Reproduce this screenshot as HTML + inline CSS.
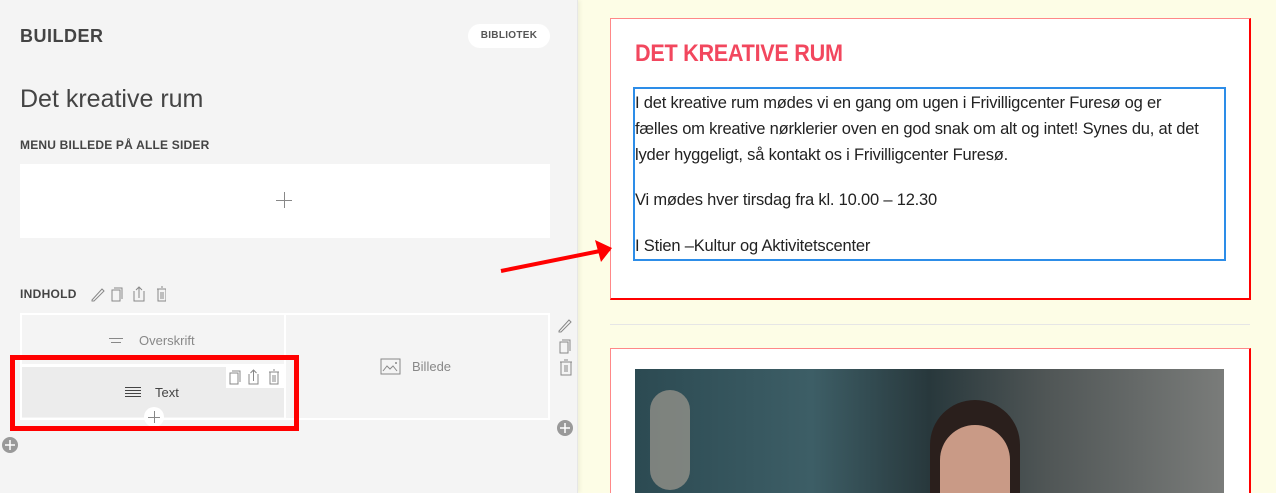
<!DOCTYPE html>
<html style="overflow:hidden;width:1276px;height:493px"><head><meta charset="utf-8"><style>
*{margin:0;padding:0;box-sizing:border-box}
body{width:1276px;height:493px;overflow:hidden;position:relative;font-family:"Liberation Sans",sans-serif;background:#fdfde6}
.a{position:absolute}
#left{left:0;top:0;width:578px;height:493px;background:#f4f4f4;border-right:1px solid #e6e6e6;box-shadow:2px 0 4px rgba(0,0,0,.06)}
.ic{stroke:#888;fill:none;stroke-width:1}
</style></head><body>
<div id="left" class="a">
 <div class="a" style="left:20px;top:26px;font-size:18px;font-weight:bold;color:#444;letter-spacing:.5px">BUILDER</div>
 <div class="a" style="left:468px;top:24px;width:82px;height:24px;background:#fff;border-radius:12px;font-size:10px;font-weight:bold;color:#555;text-align:center;line-height:24px;letter-spacing:.3px">BIBLIOTEK</div>
 <div class="a" style="left:20px;top:85px;font-size:25px;color:#444">Det kreative rum</div>
 <div class="a" style="left:20px;top:138px;font-size:12px;font-weight:bold;color:#444;letter-spacing:.2px">MENU BILLEDE PÅ ALLE SIDER</div>
 <div class="a" style="left:20px;top:164px;width:530px;height:74px;background:#fff"></div>
 <svg class="a" style="left:276px;top:192px" width="16" height="16"><path class="ic" d="M0 8.5H16M8.5 0V16"/></svg>
 <div class="a" style="left:20px;top:287px;font-size:12px;font-weight:bold;color:#444;letter-spacing:.3px">INDHOLD</div>
 <svg class="a" style="left:90px;top:286px" width="76" height="16"><path class="ic" d="M2 14L12 3l2 2L4 15H2z M22 4h8v11h-8z M24 2h8v11 M44 5v10h10V5 M49 12V1 M46 4l3-3 3 3 M67 3h10 M71 1h2 M68 3v12h8V3 M71 6v7 M73 6v7"/></svg>
 <div class="a" style="left:20px;top:313px;width:530px;height:107px;border:2px solid #fff"></div>
 <div class="a" style="left:284px;top:313px;width:2px;height:107px;background:#fff"></div>
 <div class="a" style="left:20px;top:364px;width:266px;height:3px;background:#fff"></div>
 <svg class="a" style="left:108px;top:336px" width="18" height="10"><path class="ic" d="M1 2.5h14M3 6.5h10"/></svg>
 <div class="a" style="left:139px;top:333px;font-size:13px;color:#888">Overskrift</div>
 <div class="a" style="left:22px;top:367px;width:262px;height:50px;background:#ececec"></div>
 <div class="a" style="left:226px;top:367px;width:58px;height:21px;background:#fff"></div>
 <svg class="a" style="left:229px;top:369px" width="56" height="16"><path class="ic" d="M1 4h8v11H1z M3 2h8v11 M20 5v10h9V5 M24.5 12V1 M21.5 4l3-3 3 3 M40 3h10 M44 1h2 M41 3v12h8V3 M44 6v7 M46 6v7"/></svg>
 <svg class="a" style="left:124px;top:386px" width="20" height="12"><path d="M1 1.5h16M1 4.5h16M1 7.5h16M1 10.5h16" stroke="#444" stroke-width="1"/></svg>
 <div class="a" style="left:155px;top:385px;font-size:13px;color:#444">Text</div>
 <div class="a" style="left:144px;top:407px;width:20px;height:20px;border-radius:50%;background:#fff"></div>
 <svg class="a" style="left:148px;top:411px" width="12" height="12"><path class="ic" d="M0 6.5H12M6.5 0V12"/></svg>
 <div class="a" style="left:10px;top:355px;width:289px;height:76px;border:5px solid #f00"></div>
 <svg class="a" style="left:380px;top:358px" width="22" height="18"><rect x="1" y="1" width="19" height="15" class="ic"/><path class="ic" d="M3 13l4-5 3 3 3-3 4 5"/><circle cx="16" cy="5" r="1" fill="#888"/></svg>
 <div class="a" style="left:412px;top:359px;font-size:13px;color:#888">Billede</div>
 <svg class="a" style="left:557px;top:317px" width="18" height="60"><path class="ic" d="M2 14L12 3l2 2L4 15H2z M3 25h8v11H3z M5 23h8v11 M3 45h12 M7 43h4 M4 45v13h10V45 M8 48v7 M10 48v7"/></svg>
 <div class="a" style="left:557px;top:420px;width:16px;height:16px;border-radius:50%;background:#999"></div>
 <svg class="a" style="left:557px;top:420px" width="16" height="16"><path d="M3 8h10M8 3v10" stroke="#fff" stroke-width="1.5"/></svg>
 <div class="a" style="left:2px;top:437px;width:16px;height:16px;border-radius:50%;background:#999"></div>
 <svg class="a" style="left:2px;top:437px" width="16" height="16"><path d="M3 8h10M8 3v10" stroke="#fff" stroke-width="1.5"/></svg>
</div>
<div class="a" style="left:610px;top:18px;width:641px;height:282px;background:#fff;border:1px solid #f88;border-right:2px solid #f00;border-bottom:2px solid #f00"></div>
<div class="a" style="left:635px;top:40px;font-size:24px;font-weight:bold;color:#f2475e;transform:scaleX(.9);transform-origin:left;letter-spacing:-.3px">DET KREATIVE RUM</div>
<div class="a" style="left:633px;top:87px;width:593px;height:174px;border:2px solid #2d8de8"></div>
<div class="a" style="left:635px;top:90px;width:620px;font-size:16.5px;line-height:26px;color:#222;letter-spacing:-.2px;white-space:nowrap">
I det kreative rum mødes vi en gang om ugen i Frivilligcenter Furesø og er<br>fælles om kreative nørklerier oven en god snak om alt og intet! Synes du, at det<br>lyder hyggeligt, så kontakt os i Frivilligcenter Furesø.
<div style="margin-top:19px">Vi mødes hver tirsdag fra kl. 10.00 – 12.30</div>
<div style="margin-top:20px">I Stien –Kultur og Aktivitetscenter</div>
</div>
<svg class="a" style="left:498px;top:236px" width="130" height="40"><path d="M3 35L112 13" stroke="#f00" stroke-width="4"/><path d="M114 12L97 4 103 26z" fill="#f00"/></svg>
<div class="a" style="left:610px;top:324px;width:640px;height:1px;background:#e6e6e6"></div>
<div class="a" style="left:610px;top:348px;width:641px;height:145px;background:#fff;border:1px solid #f88;border-right:2px solid #f00;border-bottom:none"></div>
<div class="a" style="left:635px;top:369px;width:589px;height:124px;background:linear-gradient(90deg,#2c4a52 0%,#3d5e66 30%,#28383c 50%,#505656 70%,#7a7c7a 100%)"></div>
<div class="a" style="left:930px;top:400px;width:90px;height:93px;border-radius:45px 45px 0 0;background:#2a1f1c"></div>
<div class="a" style="left:940px;top:425px;width:70px;height:68px;border-radius:35px 35px 0 0;background:#c99a86"></div>
<div class="a" style="left:650px;top:390px;width:40px;height:100px;border-radius:20px;background:#a09a90;opacity:.7"></div>
</body></html>
